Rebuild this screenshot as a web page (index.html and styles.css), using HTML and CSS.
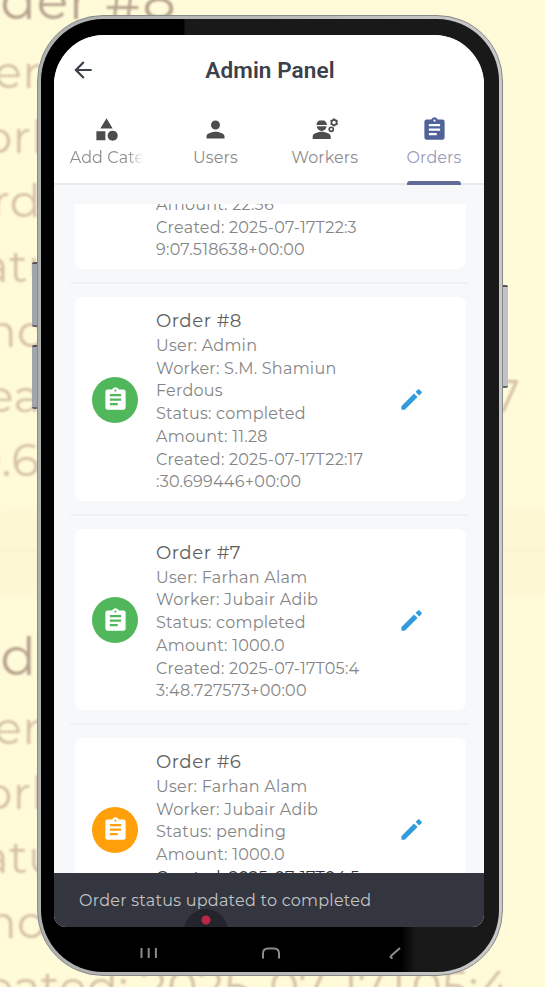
FILE: index.html
```html
<!DOCTYPE html>
<html lang="en">
<head>
<meta charset="utf-8">
<title>Admin Panel</title>
<link rel="stylesheet" href="styles.css">
</head>
<body>
<svg class="defs" aria-hidden="true">
  <symbol id="clip" viewBox="0 0 24 24"><path d="M19 3h-4.18C14.4 1.84 13.3 1 12 1s-2.4.84-2.82 2H5a2 2 0 0 0-2 2v14a2 2 0 0 0 2 2h14a2 2 0 0 0 2-2V5a2 2 0 0 0-2-2zm-7 0a1 1 0 1 1 0 2 1 1 0 0 1 0-2zm2 14H7v-2h7v2zm3-4H7v-2h10v2zm0-4H7V7h10v2z"/></symbol>
  <symbol id="pencil" viewBox="0 0 24 24"><path d="M3 18v2.500q0 .5.5.5H6L17.400 9.800l-3.200-3.200L3 18zM21 6.200a1 1 0 0 0 0-1.200l-2-2a1 1 0 0 0-1.200 0L15.600 5.200l3.200 3.200L21 6.200z"/></symbol>
</svg>
<div class="scene">
  <div class="backdrop" aria-hidden="true">
    <div class="big">
      <h3>Order #8</h3>
      <p>User:</p><p>Worker:</p><p>Ferdous</p><p>Status:</p><p>Amount:</p><p>Created: 2025-07-17T22:17</p><p>:30.69</p>
    </div>
    <div class="big">
      <h3>Order</h3>
      <p>User:</p><p>Worker:</p><p>Status:</p><p>Amount:</p><p>Created: 2025-07-17T05:4</p>
    </div>
  </div>
  <i class="key key-up"></i><i class="key key-down"></i><i class="key key-power"></i>
  <div class="phone">
    <div class="bezel">
      <div class="screen">
        <header class="bar">
          <svg class="back" viewBox="0 0 24 24"><path d="M20 11H7.83l5.59-5.59L12 4l-8 8 8 8 1.41-1.41L7.83 13H20v-2z"/></svg>
          <h1>Admin Panel</h1>
        </header>
        <nav class="tabs">
          <div class="tab"><svg viewBox="0 0 24 24"><path d="M12 2 17.5 11h-11zM3 13.5h8v8H3z"/><circle cx="17.5" cy="17.5" r="4.5"/></svg><span class="cut">Add Cate</span></div>
          <div class="tab"><svg viewBox="0 0 24 24"><path d="M12 12a4 4 0 1 0 0-8 4 4 0 0 0 0 8zm0 2c-2.67 0-8 1.34-8 4v2h16v-2c0-2.66-5.33-4-8-4z"/></svg><span>Users</span></div>
          <div class="tab"><svg viewBox="0 0 24 24"><path d="M9.500 14c-2.670 0-8 1.340-8 4v2.500h16V18c0-2.660-5.330-4-8-4zM5.200 9h8.600a4.300 4.300 0 0 1-8.600 0zM4.800 7.900c.2-1.900 1.200-3.200 2.500-3.900l4.400 0c1.300.7 2.300 2 2.500 3.900z"/><circle class="cog" cx="20.500" cy="5.700" r="2.300"/><path class="teeth" d="M20.500 2v1.300M20.500 8.100v1.300M17.300 3.900l1.200.8M22.500 6.700l1.200.8M17.300 7.500l1.200-.8M22.500 4.700l1.200-.8"/><circle class="cog" cx="18" cy="11.800" r="1.800"/></svg><span>Workers</span></div>
          <div class="tab active"><svg viewBox="0 0 24 24"><use href="#clip"/></svg><span>Orders</span></div>
        </nav>
        <main class="list">
          <article class="card first">
            <div class="badge"></div>
            <div class="info"><p>Amount: 22.56</p><p>Created: 2025-07-17T22:3</p><p>9:07.518638+00:00</p></div>
          </article>
          <hr>
          <article class="card">
            <div class="badge done"><svg><use href="#clip"/></svg></div>
            <div class="info"><h2>Order #8</h2><p>User: Admin</p><p>Worker: S.M. Shamiun</p><p>Ferdous</p><p>Status: completed</p><p>Amount: 11.28</p><p>Created: 2025-07-17T22:17</p><p>:30.699446+00:00</p></div>
            <svg class="edit"><use href="#pencil"/></svg>
          </article>
          <hr>
          <article class="card">
            <div class="badge done"><svg><use href="#clip"/></svg></div>
            <div class="info"><h2>Order #7</h2><p>User: Farhan Alam</p><p>Worker: Jubair Adib</p><p>Status: completed</p><p>Amount: 1000.0</p><p>Created: 2025-07-17T05:4</p><p>3:48.727573+00:00</p></div>
            <svg class="edit"><use href="#pencil"/></svg>
          </article>
          <hr>
          <article class="card">
            <div class="badge pending"><svg><use href="#clip"/></svg></div>
            <div class="info"><h2>Order #6</h2><p>User: Farhan Alam</p><p>Worker: Jubair Adib</p><p>Status: pending</p><p>Amount: 1000.0</p><p class="dark">Created: 2025-07-17T04:5</p><p>&nbsp;</p></div>
            <svg class="edit"><use href="#pencil"/></svg>
          </article>
        </main>
        <div class="snack"><i class="rec"></i><span>Order status updated to completed</span></div>
      </div>
      <div class="sysnav">
        <svg viewBox="0 0 20 14"><path d="M2.500 2v10M9.700 2v10M16.900 2v10"/></svg>
        <svg viewBox="0 0 20 14"><path d="M2 12.500V7.500q0-5 5-5h6q5 0 5 5v5"/></svg>
        <svg viewBox="0 0 20 14"><path d="M17 2 8.500 9.500l-1 1.500 2 1.500"/></svg>
      </div>
    </div>
  </div>
</div>
</body>
</html>
```
FILE: styles.css
```css
* { box-sizing: border-box; }
body { margin: 0; background: #fffad7; font-family: Montserrat, Inter, sans-serif; }
h1, h2, h3, p { margin: 0; font-weight: 400; white-space: nowrap; }
svg { display: block; fill: currentColor; }
.defs { position: absolute; width: 0; height: 0; }
.scene { position: relative; width: 545px; height: 987px; overflow: hidden; padding: 15px 42px 11px 37px; }

.backdrop { position: absolute; inset: 0; color: #d6c1a8; filter: blur(1.2px); background: linear-gradient(#fffad7 505px, #fef7d4 520px, #fef7d4 548px, #fbf0ce 550px, #fef7d4 553px, #fef7d4 585px, #fffad7 600px); }
.big { margin-left: -65px; font-size: 45.600px; line-height: 64.700px; letter-spacing: .5px; }
.big h3 { font-size: 52px; line-height: 78px; color: #b6a28e; letter-spacing: .9px; }
.big:first-child { margin-top: -38px; height: 656px; }

.key { position: absolute; width: 7px; border-radius: 2px; background: #a2a5aa; border-top: 2px solid #555; border-bottom: 2px solid #666; }
.key-up { left: 32px; top: 262px; height: 65px; }
.key-down { left: 32px; top: 345px; height: 64px; }
.key-power { left: 501px; top: 285px; height: 103px; background: #c0c0c8; }

.phone { position: relative; width: 466px; height: 961px; padding: 3px; border-radius: 66px; border: 1px solid #868a88; background: linear-gradient(90deg, #aeb0b0, #b9b9b9 50%, #c9c9c9); }
.bezel { width: 100%; height: 100%; border-radius: 62px; padding: 16px 15px 0 13px; background: linear-gradient(90deg, #000 143px, #191919 144px) top / 100% 480px no-repeat, linear-gradient(90deg, #000 360px, #191919 375px) #000; overflow: hidden; }
.screen { height: 892px; border-radius: 50px 50px 12px 12px; overflow: hidden; background: #f7f8fa; display: flex; flex-direction: column; }

.bar { flex: none; height: 70px; display: grid; grid-template-columns: 58px 1fr 58px; align-items: center; background: #fff; color: #3b404b; }
.back { width: 26px; height: 26px; margin-left: 16px; }
.bar h1 { font: 600 22.500px/30px Roboto, sans-serif; text-align: center; letter-spacing: .1px; padding-left: 2px; }

.tabs { flex: none; height: 80px; display: grid; grid-template-columns: repeat(4, 109.300px); margin-left: -2.500px; background: #fff; border-bottom: 2px solid #e8e9eb; color: #8c8c8c; }
.tab { position: relative; display: flex; flex-direction: column; align-items: center; padding-top: 11px; font-size: 16px; line-height: 23px; letter-spacing: .1px; }
.tab svg { width: 27px; height: 27px; color: #4d4d4d; margin-bottom: 3px; }
.cut { width: 73px; overflow: hidden; white-space: nowrap; -webkit-mask: linear-gradient(90deg, #000 58px, transparent 73px); }
.active { color: #9a9abb; }
.active svg { color: #51629b; }
.active::after { content: ""; position: absolute; bottom: -2px; width: 54px; height: 4px; border-radius: 3px 3px 0 0; background: #626a9a; }
.cog { fill: none; stroke: currentColor; stroke-width: 1.500; }
.teeth { fill: none; stroke: currentColor; stroke-width: 1.300; }

.list { flex: 1; min-height: 0; overflow: hidden; margin-top: 19px; padding: 0 16px; }
.card { display: grid; grid-template-columns: 46px 1fr 28px; column-gap: 18px; align-items: center; margin: 0 2px 0 5px; padding: 9.700px 41px 7.700px 17px; border-radius: 8px; background: #fff; }
.card.first { padding-top: 0; height: 65px; grid-template-rows: 100%; border-radius: 0 0 8px 8px; align-items: end; }
.list hr { height: 1.500px; border: 0; margin: 13.200px 0 13.100px; background: #eff1f3; }
.info { position: relative; top: .8px; min-width: 0; color: #858585; font-size: 16px; line-height: 22.750px; letter-spacing: .25px; }
.info h2 { color: #606060; font-size: 18.200px; line-height: 27.500px; letter-spacing: .5px; }
.info .dark { color: #333; }
.badge { width: 46px; height: 46px; border-radius: 50%; display: grid; place-items: center; color: #fff; }
.first .badge { height: 0; }
.badge svg { width: 27px; height: 27px; }
.done { background: #50b75a; }
.pending { background: #ff9f0a; }
.edit { width: 27px; height: 27px; color: #319bdc; justify-self: end; }

.snack { position: relative; flex: none; height: 54px; padding: 0 25px; display: flex; align-items: center; background: #33363e; color: #c2c3c6; font-size: 16px; letter-spacing: .25px; overflow: hidden; white-space: nowrap; }
.snack span { position: relative; }
.rec { position: absolute; left: 130px; top: 36px; width: 44px; height: 44px; border-radius: 50%; background: radial-gradient(circle at 22px 11px, #bb2548 4px, #24252c 5px); }
.sysnav { height: 50px; display: grid; grid-template-columns: 20px 20px 20px; column-gap: 102px; justify-content: start; align-items: center; padding: 1px 0 0 85px; }
.sysnav svg { width: 20px; height: 14px; fill: none; stroke: #8b8b8b; stroke-width: 2; }
```
